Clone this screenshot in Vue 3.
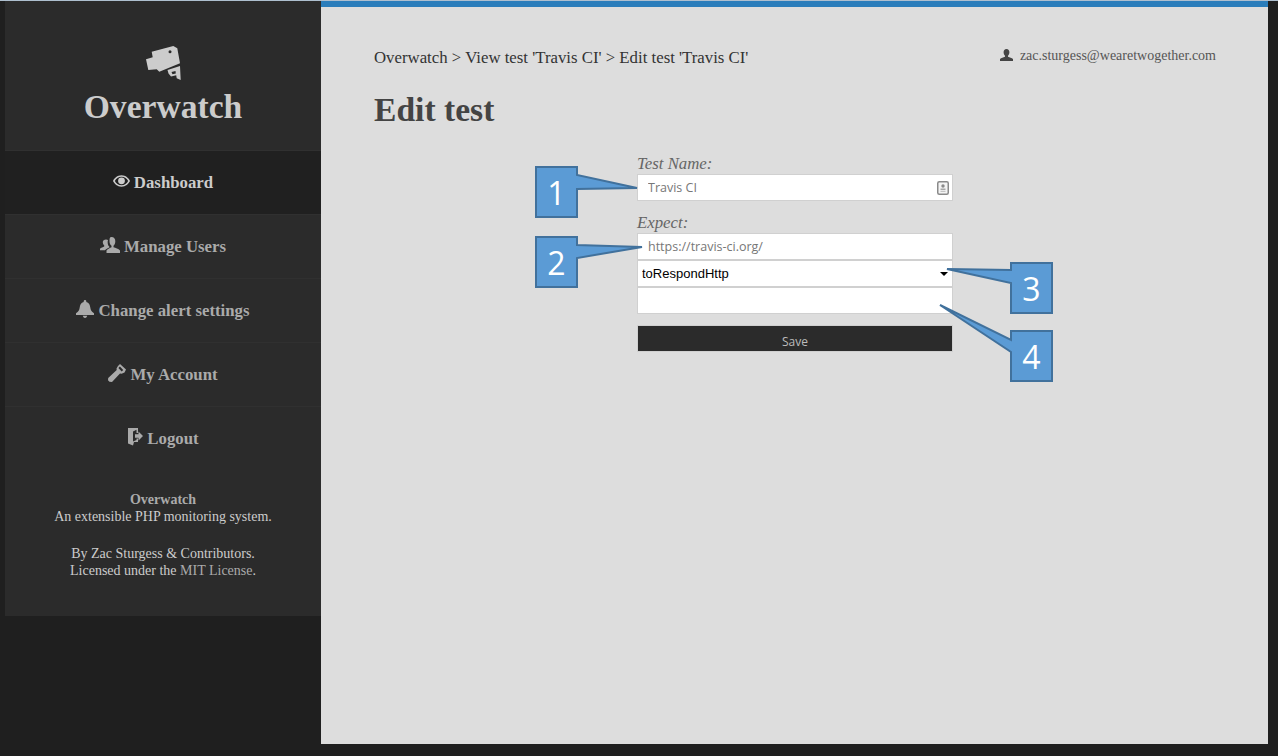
<script setup>
const nav = [
  { label: 'Dashboard', icon: 'eye', active: true },
  { label: 'Manage Users', icon: 'users' },
  { label: 'Change alert settings', icon: 'bell' },
  { label: 'My Account', icon: 'key' },
  { label: 'Logout', icon: 'logout' },
]

// x, y = number box, tip = where the wedge points, base = wedge start and end on the box edge
const callouts = [
  { n: 1, x: 536, y: 167, side: 'right', base: [175, 189], tip: [637, 188] },
  { n: 2, x: 536, y: 237, side: 'right', base: [245, 258], tip: [642, 247] },
  { n: 3, x: 1011, y: 263, side: 'left', base: [270, 283], tip: [947, 269] },
  { n: 4, x: 1011, y: 331, side: 'left', base: [340, 352], tip: [940, 305] },
]

const boxW = 41
const boxH = 50

const outline = (c) => {
  const l = c.x
  const r = c.x + boxW
  const t = c.y
  const b = c.y + boxH
  const [b1, b2] = c.base
  const tip = c.tip.join(',')
  if (c.side === 'right') {
    return `${l},${t} ${r},${t} ${r},${b1} ${tip} ${r},${b2} ${r},${b} ${l},${b}`
  }
  return `${l},${t} ${r},${t} ${r},${b} ${l},${b} ${l},${b2} ${tip} ${l},${b1}`
}
</script>

<template>
  <div class="page">
    <aside class="sidebar">
      <header class="brand">
        <svg class="brand-icon" viewBox="0 0 35 34" width="35" height="34">
          <path d="M5.700 5.700 27.300 0 31.300 2.300 34 17.300 13.300 25.700 10.700 23.300 2.300 24 0 13.300 6.700 11.300z" fill="#cccccc" />
          <circle cx="24" cy="5.700" r="1.500" fill="#2b2b2b" />
          <path fill-rule="evenodd" d="M21.500 24 34 20 34.700 34 30.700 32.300 30.200 29.300 25 30.500 22.500 27.500zM25.500 26 26.500 28.300 29.800 27.400 29.500 25z" fill="#cccccc" />
        </svg>
        <h1>Overwatch</h1>
      </header>

      <nav class="menu">
        <a v-for="item in nav" :key="item.label" class="menu-item" :class="{ active: item.active }">
          <svg v-if="item.icon === 'eye'" class="ico" viewBox="0 0 18 14" width="17" height="14">
            <path fill-rule="evenodd" d="M9 1C4.500 1 1.500 4 0 7c1.500 3 4.500 6 9 6s7.500-3 9-6c-1.500-3-4.500-6-9-6zM9 2.500c3.200 0 5.800 2 7 4.500-1.200 2.500-3.800 4.500-7 4.500S3.200 9.500 2 7c1.200-2.500 3.800-4.500 7-4.500z" />
            <circle cx="9" cy="6.800" r="3.600" />
          </svg>
          <svg v-else-if="item.icon === 'users'" class="ico" viewBox="0 0 20 16" width="20" height="16">
            <path d="M11.500 0c2.500 0 3.800 1.800 3.800 4.200 0 2-.8 3.600-1.800 4.500v1.600c2 .7 5 1.500 6.500 3.200V16H6.500v-2.500c1.500-1.700 3.500-2.500 5-3.200V8.700c-1.200-.9-2-2.500-2-4.500C9.500 1.800 9.500 0 11.500 0z" />
            <path d="M6 2.500c.8 0 1.500.2 2 .6-.3.8-.4 1.800-.3 2.800.1 1.500.7 3 1.700 3.900v.7c-1.700.7-3.500 1.500-4.500 2.800H0v-1.500c1-1 3-1.700 4.200-2.200V8.300C3.400 7.600 2.800 6.500 2.800 5 2.800 3.500 4.200 2.500 6 2.500z" />
          </svg>
          <svg v-else-if="item.icon === 'bell'" class="ico" viewBox="0 0 18 18" width="18" height="18">
            <path d="M9 0c.8 0 1.300.6 1.300 1.300v.6C13 2.600 14 4.800 14.300 7.500c.3 2.300 1.200 4.200 3.700 5.800v1.700H0v-1.700c2.500-1.600 3.400-3.500 3.700-5.800C4 4.800 5 2.600 7.700 1.900v-.6C7.700.6 8.200 0 9 0z" />
            <path d="M6.800 15.800h4.400C11 17 10.200 18 9 18s-2-1-2.200-2.200z" />
          </svg>
          <svg v-else-if="item.icon === 'key'" class="ico" viewBox="0 0 18 18" width="18" height="18">
            <path fill-rule="evenodd" d="M12 0l6 5.500-1.500 3-3 1.200-1.500-.2L4 18l-2.500-.3L0 16.200l.2-2.200L8.700 6 8.500 4.500 10 2zM11.900 2.600l-1.500 1.500 3.300 3.300 1.500-1.500z" />
          </svg>
          <svg v-else class="ico" viewBox="0 0 16 18" width="16" height="18">
            <path d="M1 0h10v5H9.500V1.800L6 3.500v10l3.500-1.500v-1.500H11v3.500H7L6 17.500 1 15.500z" />
            <path d="M8 6.300h3.500V3.500L16 8l-4.500 4.500V9.700H8z" />
          </svg>
          <span>{{ item.label }}</span>
        </a>
      </nav>

      <footer class="about">
        <p><strong>Overwatch</strong><br />An extensible PHP monitoring system.</p>
        <p>By Zac Sturgess &amp; Contributors.<br />Licensed under the <span class="link">MIT License</span>.</p>
      </footer>
    </aside>

    <main class="main">
      <div class="topline">
        <div class="crumbs">Overwatch &gt; View test 'Travis CI' &gt; Edit test 'Travis CI'</div>
        <div class="user">
          <svg viewBox="0 0 13 12" width="13" height="12">
            <path d="M6.500 0c1.900 0 2.900 1.400 2.900 3.200 0 1.500-.6 2.800-1.400 3.500v1.100c1.600.5 3.800 1.100 5 2.200V12H0v-2c1.200-1.100 3.400-1.700 5-2.200V6.700C4.200 6 3.600 4.700 3.600 3.200 3.600 1.400 4.600 0 6.500 0z" />
          </svg>
          <span>zac.sturgess@wearetwogether.com</span>
        </div>
      </div>

      <h2>Edit test</h2>

      <form class="form" @submit.prevent>
        <label>Test Name:</label>
        <div class="field">
          <input class="input first" type="text" value="Travis CI" />
          <svg class="contact" viewBox="0 0 12 14" width="12" height="14">
            <rect x="0.750" y="0.750" width="10.500" height="12.500" rx="1.500" fill="#f4f4f4" stroke="#8a8a8a" stroke-width="1.500" />
            <circle cx="6" cy="5" r="1.700" fill="#8a8a8a" />
            <rect x="3.500" y="7.500" width="5" height="1.500" fill="#a8a8a8" />
            <rect x="3.500" y="9.800" width="5" height="1.200" fill="#c4c4c4" />
          </svg>
        </div>

        <label class="second">Expect:</label>
        <input class="input" type="text" value="https://travis-ci.org/" />
        <div class="field">
          <select class="input pick">
            <option>toRespondHttp</option>
          </select>
          <span class="caret"></span>
        </div>
        <input class="input" type="text" />
        <button class="save" type="submit">Save</button>
      </form>
    </main>

    <svg class="overlay" viewBox="0 0 1278 756" width="1278" height="756">
      <g v-for="c in callouts" :key="c.n">
        <polygon :points="outline(c)" fill="#5b9bd5" stroke="#41719c" stroke-width="2" />
        <text :x="c.x + boxW / 2" :y="c.y + 38" text-anchor="middle" class="num">{{ c.n }}</text>
      </g>
    </svg>
  </div>
</template>

<style>
body {
  background: #1f1f1f;
}
</style>

<style scoped>
.page {
  position: relative;
  display: flex;
  box-sizing: border-box;
  width: 1278px;
  height: 756px;
  overflow: hidden;
  padding: 0 10px 12px 5px;
  border-top: 1px solid #aebfcf;
  background: #1f1f1f;
  font-family: "Liberation Serif", "Times New Roman", serif;
}

.sidebar {
  flex: 0 0 316px;
  align-self: flex-start;
  background: #2b2b2b;
  color: #aaaaaa;
}

.brand {
  height: 149px;
  box-sizing: border-box;
  padding-top: 45px;
  text-align: center;
}

.brand-icon {
  display: block;
  margin: 0 auto;
}

.brand h1 {
  margin: 8px 0 0;
  font-size: 33.600px;
  line-height: 38px;
  color: #cccccc;
}

.menu-item {
  display: flex;
  align-items: center;
  justify-content: center;
  gap: 4px;
  height: 64px;
  box-sizing: border-box;
  border-top: 1px solid #303030;
  font-size: 16.800px;
  font-weight: bold;
  color: #aaaaaa;
}

.menu-item.active {
  background: #202020;
  color: #cccccc;
}

.ico {
  flex: none;
  margin-top: -4px;
  fill: currentColor;
}

.about {
  height: 146px;
  box-sizing: border-box;
  padding-top: 21px;
  text-align: center;
  font-size: 14px;
  line-height: 17px;
  color: #cccccc;
}

.about p {
  margin: 0 0 20px;
}

.about strong,
.link {
  color: #aaaaaa;
}

.main {
  flex: 1;
  box-sizing: border-box;
  border-top: 6px solid #2a7dbb;
  padding: 40px 52px 0 53px;
  background: #dddddd;
  color: #444444;
}

.topline {
  display: flex;
  justify-content: space-between;
}

.crumbs {
  font-size: 16.800px;
  line-height: 22px;
  color: #333333;
}

.user {
  display: flex;
  align-items: center;
  gap: 7px;
  height: 18px;
  font-size: 14px;
  color: #555555;
}

.user svg {
  fill: #444444;
  margin-top: -3px;
}

h2 {
  margin: 22px 0 0;
  font-size: 33.600px;
  line-height: 38px;
  color: #444444;
}

.form {
  display: flex;
  flex-direction: column;
  width: 316px;
  margin: 25px 0 0 263px;
}

label {
  font-size: 16.800px;
  font-style: italic;
  line-height: 20px;
  color: #666666;
}

label.second {
  margin-top: 12px;
}

.field {
  position: relative;
}

.input {
  display: block;
  box-sizing: border-box;
  width: 100%;
  height: 27px;
  border: 1px solid #d0d0d0;
  border-radius: 0;
  outline: none;
  padding: 0 10px;
  background: #ffffff;
  font-family: "Open Sans", sans-serif;
  font-size: 12.500px;
  color: #777777;
}

.pick {
  appearance: none;
  padding: 0 4px;
  font-family: "Liberation Sans", Arial, sans-serif;
  font-size: 13px;
  color: #000000;
}

.contact {
  position: absolute;
  top: 7px;
  right: 4px;
}

.caret {
  position: absolute;
  top: 12px;
  right: 5px;
  border-style: solid;
  border-width: 4px 4px 0;
  border-color: #000000 transparent transparent;
}

.save {
  height: 27px;
  margin-top: 11px;
  padding: 6px 0 0;
  border: 1px solid #d0d0d0;
  background: #2b2b2b;
  font-family: "Open Sans", sans-serif;
  font-size: 12px;
  color: #bbbbbb;
}

.overlay {
  position: absolute;
  top: -1px;
  left: 0;
}

.num {
  font-family: "Open Sans", sans-serif;
  font-size: 32px;
  fill: #ffffff;
}
</style>
